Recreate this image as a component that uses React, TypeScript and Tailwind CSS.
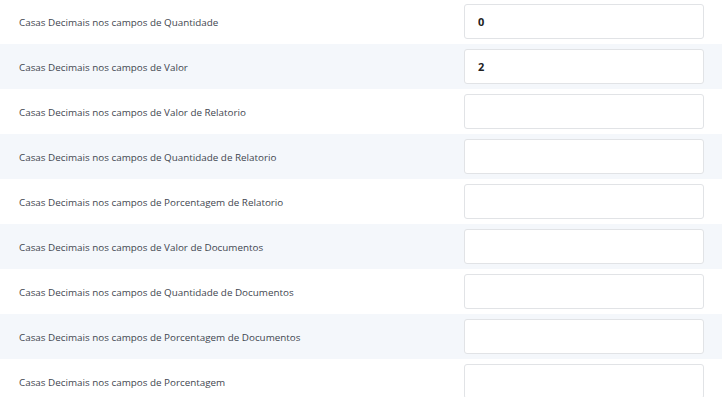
const rows: { label: string; value: string }[] = [
  { label: "Casas Decimais nos campos de Quantidade", value: "0" },
  { label: "Casas Decimais nos campos de Valor", value: "2" },
  { label: "Casas Decimais nos campos de Valor de Relatorio", value: "" },
  { label: "Casas Decimais nos campos de Quantidade de Relatorio", value: "" },
  { label: "Casas Decimais nos campos de Porcentagem de Relatorio", value: "" },
  { label: "Casas Decimais nos campos de Valor de Documentos", value: "" },
  { label: "Casas Decimais nos campos de Quantidade de Documentos", value: "" },
  { label: "Casas Decimais nos campos de Porcentagem de Documentos", value: "" },
  { label: "Casas Decimais nos campos de Porcentagem", value: "" },
];

export default function App() {
  return (
    <div className="w-[722px] h-[397px] overflow-hidden bg-white font-['Open_Sans',sans-serif]">
      <div className="-mt-px flex flex-col">
        {rows.map((row, i) => (
          <div
            key={row.label}
            className={`flex items-center h-[45px] shrink-0 ${i % 2 === 1 ? "bg-[#f4f7fb]" : "bg-white"}`}
          >
            <div className="flex-1 pl-[19px] pt-px text-[9.85px] text-[#3f4650]">{row.label}</div>
            <input
              readOnly
              value={row.value}
              className="w-[240px] h-[35px] mr-[18px] px-[13px] rounded-[3px] border border-[#e1e3e6] bg-white text-[11px] font-bold text-[#222] outline-none"
            />
          </div>
        ))}
      </div>
    </div>
  );
}
